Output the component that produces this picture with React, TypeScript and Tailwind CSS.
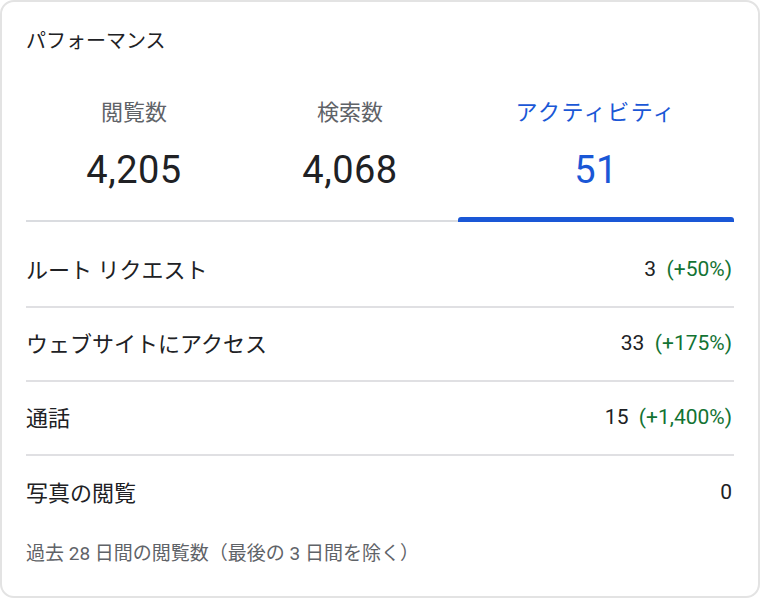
import React from 'react';

const font = { fontFamily: 'Roboto, "Noto Sans CJK JP", sans-serif' };

export default function App() {
  const tabs = [
    { label: '閲覧数', value: '4,205', width: 'w-[216px]', active: false },
    { label: '検索数', value: '4,068', width: 'w-[216px]', active: false },
    { label: 'アクティビティ', value: '51', width: 'flex-1', active: true },
  ];

  const rows = [
    { label: 'ルート リクエスト', value: '3', change: '(+50%)' },
    { label: 'ウェブサイトにアクセス', value: '33', change: '(+175%)' },
    { label: '通話', value: '15', change: '(+1,400%)' },
    { label: '写真の閲覧', value: '0', change: '' },
  ];

  return (
    <div className="w-[760px] h-[598px] bg-white" style={font}>
      <div className="w-full h-full border-2 border-[#e3e3e3] rounded-[14px] bg-white px-[24px] flex flex-col">
        {/* Title */}
        <div className="pt-[25px] text-[20px] leading-[28px] text-[#202124]">パフォーマンス</div>

        {/* Tabs */}
        <div className="mt-[43px] flex items-end border-b-2 border-[#dadce0]">
          {tabs.map((tab) => (
            <div key={tab.label} className={`${tab.width} flex flex-col items-center`}>
              <div
                className={`text-[22px] leading-[30px] ${tab.active ? 'text-[#1a57d6] tracking-[1.5px]' : 'text-[#5f6368]'}`}
              >
                {tab.label}
              </div>
              <div
                className={`mt-[19px] text-[38px] leading-[46px] tracking-[0.5px] ${tab.active ? 'text-[#1a57d6]' : 'text-[#202124]'}`}
              >
                {tab.value}
              </div>
              <div
                className={`mt-[24px] w-full h-[5px] -mb-[2px] rounded-t-[3px] ${tab.active ? 'bg-[#1a57d6]' : 'bg-transparent'}`}
              />
            </div>
          ))}
        </div>

        {/* Metric rows */}
        <div className="mt-[12px] flex flex-col">
          {rows.map((row, i) => (
            <div
              key={row.label}
              className={`h-[74px] flex items-center justify-between pr-[2px] ${i < rows.length - 1 ? 'border-b-2 border-[#e0e0e3]' : ''}`}
            >
              <span className="text-[22px] text-[#202124]">{row.label}</span>
              <span className="text-[21px] text-[#202124] whitespace-pre">
                {row.value}
                {row.change && <span className="text-[#137333]">{'  ' + row.change}</span>}
              </span>
            </div>
          ))}
        </div>

        {/* Footer */}
        <div className="mt-[10px] text-[19px] leading-[28px] text-[#5f6368]">
          過去 28 日間の閲覧数（最後の 3 日間を除く）
        </div>
      </div>
    </div>
  );
}
